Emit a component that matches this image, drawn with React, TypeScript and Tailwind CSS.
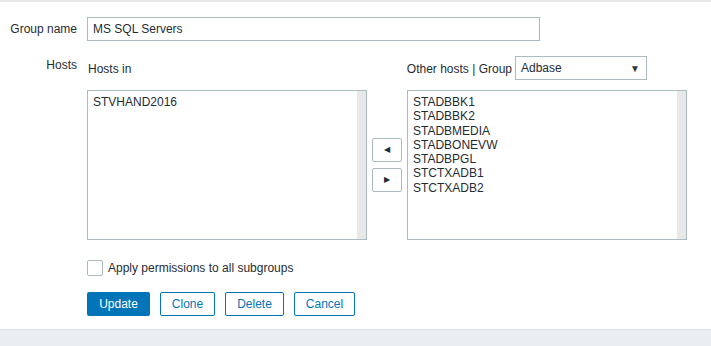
import { useState } from 'react';

const HOSTS_IN = ['STVHAND2016'];
const OTHER_HOSTS = [
  'STADBBK1', 'STADBBK2', 'STADBMEDIA', 'STADBONEVW',
  'STADBPGL', 'STCTXADB1', 'STCTXADB2'
];

function ListBox({ items }: { items: string[] }) {
  return (
    <div className="flex h-[150px] w-[280px] border border-[#acbbc2] bg-white">
      <div className="flex-1 pl-[5px] pt-[4px] leading-[14.3px]">
        {items.map(item => (
          <div key={item}>{item}</div>
        ))}
      </div>
      <div className="w-[9px] bg-[#e8e8e8]" />
    </div>
  );
}

export default function App() {
  const [name, setName] = useState('MS SQL Servers');
  const [applyAll, setApplyAll] = useState(false);

  return (
    <div className="flex h-[346px] w-[711px] flex-col bg-white text-[12px] text-[#1f2c33] [font-family:'Liberation_Sans',Arial,sans-serif]">
      <div className="h-[2px] bg-[#e6e8ea]" />

      <div className="flex-1 pt-[15px]">
        {/* Group name */}
        <div className="flex items-center">
          <label className="w-[78px] pr-px text-right">Group name</label>
          <input
            type="text"
            value={name}
            onChange={e => setName(e.target.value)}
            className="ml-[9px] h-[24px] w-[453px] border border-[#acbbc2] px-[5px] text-[12px] outline-none"
          />
        </div>

        {/* Hosts */}
        <div className="mt-[15px] flex">
          <div className="w-[78px] pr-px text-right">Hosts</div>
          <div className="ml-[9px]">
            <div className="flex h-[24px] items-center">
              <div className="w-[280px] pl-px pt-[2px]">Hosts in</div>
              <div className="w-[40px]" />
              <div className="flex w-[280px] items-center justify-end whitespace-nowrap pr-[40px]">
                <span className="mr-[3px] pt-[1px]">Other hosts | Group</span>
                <div className="flex h-[24px] w-[132px] shrink-0 items-center justify-between border border-[#acbbc2] pl-[5px] pr-[6px]">
                  <span>Adbase</span>
                  <span className="text-[10px] text-[#303a40]">▼</span>
                </div>
              </div>
            </div>

            <div className="mt-[10px] flex">
              <ListBox items={HOSTS_IN} />
              <div className="flex w-[40px] flex-col items-center justify-center gap-[6px]">
                <button className="flex h-[24px] w-[30px] items-center justify-center rounded-[2px] border border-[#acbbc2] bg-white text-[8px]">
                  ◀
                </button>
                <button className="flex h-[24px] w-[30px] items-center justify-center rounded-[2px] border border-[#acbbc2] bg-white text-[8px]">
                  ▶
                </button>
              </div>
              <ListBox items={OTHER_HOSTS} />
            </div>

            <label className="mt-[19px] flex items-center">
              <span
                onClick={() => setApplyAll(!applyAll)}
                className="flex h-[16px] w-[16px] items-center justify-center rounded-[2px] border border-[#acbbc2] text-[11px]"
              >
                {applyAll ? '✓' : ''}
              </span>
              <span className="ml-[5px]">Apply permissions to all subgroups</span>
            </label>

            <div className="mt-[15px] flex gap-[10px]">
              <button className="h-[24px] w-[63px] rounded-[2px] bg-[#0275b8] text-white">Update</button>
              <button className="h-[24px] w-[55px] rounded-[2px] border border-[#0275b8] text-[#0275b8]">Clone</button>
              <button className="h-[24px] w-[59px] rounded-[2px] border border-[#0275b8] text-[#0275b8]">Delete</button>
              <button className="h-[24px] w-[61px] rounded-[2px] border border-[#0275b8] text-[#0275b8]">Cancel</button>
            </div>
          </div>
        </div>
      </div>

      <div className="h-[17px] border-t border-[#dfe4e7] bg-[#ebeef0]" />
    </div>
  );
}
